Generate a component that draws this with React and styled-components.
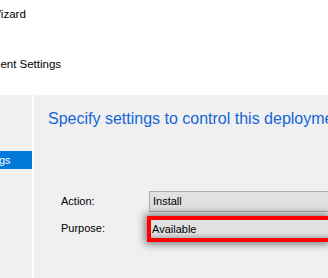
import React from "react";
import styled, { createGlobalStyle } from "styled-components";

const Global = createGlobalStyle`
  html, body { margin: 0; padding: 0; }
  body {
    width: 328px;
    height: 278px;
    overflow: hidden;
    background: #f0f0f0;
    font-family: "Liberation Sans", Arial, sans-serif;
  }
`;

const Window = styled.div`
  display: flex;
  flex-direction: column;
  width: 328px;
  height: 278px;
  overflow: hidden;
`;

const Header = styled.header`
  height: 95px;
  background: #ffffff;
  display: flex;
  flex-direction: column;
  overflow: hidden;
  flex: none;
`;

const HeaderText = styled.div`
  font-size: 11.5px;
  line-height: 13px;
  color: #000;
  white-space: nowrap;
  margin-left: ${(p) => p.$shift}px;
  margin-top: ${(p) => p.$top}px;
`;

const Body = styled.div`
  flex: 1;
  display: flex;
  gap: 2px;
  background: #ffffff;
  min-height: 0;
`;

const Nav = styled.nav`
  width: 32px;
  flex: none;
  background: #f0f0f0;
  overflow: hidden;
  padding-top: 56px;
  box-sizing: border-box;
`;

const NavItem = styled.div`
  height: 18px;
  line-height: 18px;
  font-size: 11px;
  white-space: nowrap;
  color: ${(p) => (p.$active ? "#ffffff" : "#000")};
  background: ${(p) => (p.$active ? "#0078d7" : "transparent")};
  text-indent: ${(p) => p.$shift}px;
`;

const Content = styled.main`
  flex: 1;
  background: #f0f0f0;
  padding: 15px 0 0 14px;
  overflow: hidden;
  min-width: 0;
`;

const Heading = styled.h1`
  margin: 0;
  font-weight: normal;
  font-size: 16px;
  line-height: 18px;
  color: #1666d8;
  white-space: nowrap;
`;

const Form = styled.div`
  margin-top: 63px;
  margin-left: 13px;
  display: grid;
  grid-template-columns: 88px 1fr;
  row-gap: 6px;
  align-items: center;
`;

const Label = styled.div`
  font-size: 11px;
  color: #000;
  padding-bottom: 2px;
`;

const Combo = styled.div`
  height: 21px;
  box-sizing: border-box;
  border: 1px solid #adadad;
  border-right: none;
  background: #e1e1e1;
  font-size: 11px;
  line-height: 19px;
  padding-left: 3px;
  color: #000;
  white-space: nowrap;
`;

const Highlight = styled.div`
  margin-left: -2px;
  margin-top: -2px;
  margin-bottom: -2px;
  border: 4px solid #ff0000;
  border-right: none;
  box-shadow: 0 0 8px 2px rgba(0, 0, 0, 0.5);
  background: #e1e1e1;
`;

const InnerCombo = styled(Combo)`
  height: 18px;
  border: none;
  line-height: 18px;
  padding-left: 1px;
  background: linear-gradient(#e2e2e2 0%, #e0e0e0 72%, #b8b8b8 100%);
`;

export default function App() {
  return (
    <>
      <Global />
      <Window>
        <Header>
          <HeaderText $shift={-10} $top={8}>Wizard</HeaderText>
          <HeaderText $shift={-45} $top={37}>Deployment Settings</HeaderText>
        </Header>
        <Body>
          <Nav>
            <NavItem $active $shift={-91}>Deployment Settings</NavItem>
          </Nav>
          <Content>
            <Heading>Specify settings to control this deployment</Heading>
            <Form>
              <Label>Action:</Label>
              <Combo>Install</Combo>
              <Label>Purpose:</Label>
              <Highlight>
                <InnerCombo>Available</InnerCombo>
              </Highlight>
            </Form>
          </Content>
        </Body>
      </Window>
    </>
  );
}
